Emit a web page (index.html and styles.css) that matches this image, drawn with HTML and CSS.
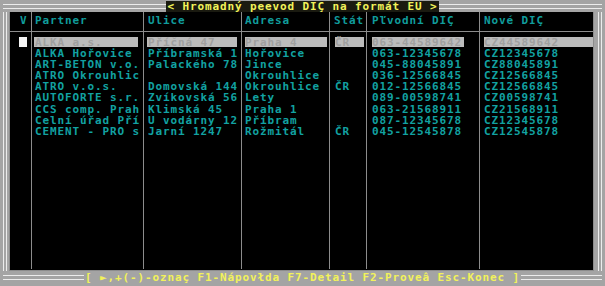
FILE: index.html
```html
<!DOCTYPE html>
<html lang="cs">
<head>
<meta charset="utf-8">
<link rel="stylesheet" href="styles.css">
</head>
<body>
<div class="screen">
  <div class="topbar">
    <span class="dline"></span>
    <span class="title">&lt; Hromadný peevod DIÇ na formát EU &gt;</span>
    <span class="dline"></span>
  </div>
  <div class="middle">
    <div class="panel">
      <div class="col c-v">
        <div class="hd">V</div>
        <div class="bd"><div class="row"><span class="chk"></span></div></div>
      </div>
      <div class="col c-p">
        <div class="hd">Partner</div>
        <div class="bd">
          <div class="row sel">ALKA a.s.</div>
          <div class="row">ALKA Hořovice</div>
          <div class="row">ART-BETON v.o.</div>
          <div class="row">ATRO Okrouhlic</div>
          <div class="row">ATRO v.o.s.</div>
          <div class="row">AUTOFORTE s.r.</div>
          <div class="row">CCS comp. Prah</div>
          <div class="row">Celní úřad Pří</div>
          <div class="row">CEMENT - PRO s</div>
        </div>
      </div>
      <div class="col c-u">
        <div class="hd">Ulice</div>
        <div class="bd">
          <div class="row sel">Příčná 47</div>
          <div class="row">Příbramská 1</div>
          <div class="row">Palackého 78</div>
          <div class="row"></div>
          <div class="row">Domovská 144</div>
          <div class="row">Zvíkovská 56</div>
          <div class="row">Klimská 45</div>
          <div class="row">U vodárny 12</div>
          <div class="row">Jarní 1247</div>
        </div>
      </div>
      <div class="col c-a">
        <div class="hd">Adresa</div>
        <div class="bd">
          <div class="row sel">Praha 4</div>
          <div class="row">Hořovice</div>
          <div class="row">Jince</div>
          <div class="row">Okrouhlice</div>
          <div class="row">Okrouhlice</div>
          <div class="row">Lety</div>
          <div class="row">Praha 1</div>
          <div class="row">Příbram</div>
          <div class="row">Rožmitál</div>
        </div>
      </div>
      <div class="col c-s">
        <div class="hd">Stát</div>
        <div class="bd">
          <div class="row sel">ČR</div>
          <div class="row"></div>
          <div class="row"></div>
          <div class="row"></div>
          <div class="row">ČR</div>
          <div class="row"></div>
          <div class="row"></div>
          <div class="row"></div>
          <div class="row">ČR</div>
        </div>
      </div>
      <div class="col c-o">
        <div class="hd">Pľvodní DIÇ</div>
        <div class="bd">
          <div class="row sel">063-44589642</div>
          <div class="row">063-12345678</div>
          <div class="row">045-88045891</div>
          <div class="row">036-12566845</div>
          <div class="row">012-12566845</div>
          <div class="row">089-00598741</div>
          <div class="row">063-21568911</div>
          <div class="row">087-12345678</div>
          <div class="row">045-12545878</div>
        </div>
      </div>
      <div class="col c-n">
        <div class="hd">Nové DIÇ</div>
        <div class="bd">
          <div class="row sel">CZ44589642</div>
          <div class="row">CZ12345678</div>
          <div class="row">CZ88045891</div>
          <div class="row">CZ12566845</div>
          <div class="row">CZ12566845</div>
          <div class="row">CZ00598741</div>
          <div class="row">CZ21568911</div>
          <div class="row">CZ12345678</div>
          <div class="row">CZ12545878</div>
        </div>
      </div>
    </div>
  </div>
  <div class="botbar">
    <span class="dline"></span>
    <span class="keys">[ ►,+(-)-oznaç F1-Nápovłda F7-Detail F2-Proveâ Esc-Konec ]</span>
    <span class="dline"></span>
  </div>
</div>
</body>
</html>
```
FILE: styles.css
```css
html, body {
  margin: 0;
  padding: 0;
  background: #a4a4a4;
}
.screen {
  width: 605px;
  height: 286px;
  box-sizing: border-box;
  background: #a4a4a4;
  padding: 0 3px 3px 3px;
  display: flex;
  flex-direction: column;
  font-family: "DejaVu Sans Mono", monospace;
  font-weight: bold;
  font-size: 11px;
  letter-spacing: 0.88px;
  line-height: 11px;
}
.topbar, .botbar {
  display: flex;
  align-items: center;
  height: 12px;
  flex: none;
}
.dline {
  flex: 1;
  height: 3px;
  border-top: 1px solid #ececec;
  border-bottom: 1px solid #ececec;
}
.title, .keys {
  color: #f2f25a;
  white-space: pre;
  padding: 0 1px;
}
.title { background: #1a1a10; }
.keys { background: #a4a4a4; }
.middle {
  flex: 1;
  border-left: 4px double #ececec;
  border-right: 4px double #ececec;
  padding: 0 4px 0 2px;
  display: flex;
}
.panel {
  flex: 1;
  background: #000;
  border: 1px solid #8c8c8c;
  border-top: none;
  display: flex;
  padding-bottom: 1px;
}
.col {
  border-right: 1px solid #8c8c8c;
  display: flex;
  flex-direction: column;
  color: #12a2a2;
}
.col:last-child { border-right: none; flex: 1; }
.hd {
  height: 16px;
  padding-top: 3px;
  border-bottom: 1px solid #8c8c8c;
  white-space: pre;
  color: #109c9c;
}
.bd { padding-top: 5px; }
.row {
  height: 11.1px;
  white-space: pre;
}
.sel {
  background: #bcbcbc;
  color: #a0a0a0;
  height: 10px;
  margin-bottom: 1.1px;
}
.c-v { width: 21px; }
.c-v .hd { padding-left: 10px; }
.c-v .bd { padding-left: 9px; }
.chk { display: block; width: 8px; height: 10px; background: #f4f4f4; }
.c-p { width: 111px; }
.c-p .hd, .c-p .row { padding-left: 3px; }
.c-p .sel { margin-left: 2px; width: 103px; padding-left: 1px; }
.c-u { width: 97px; }
.c-u .hd, .c-u .row { padding-left: 4px; }
.c-u .sel { margin-left: 3px; width: 89px; padding-left: 1px; }
.c-a { width: 87px; }
.c-a .hd, .c-a .row { padding-left: 3px; }
.c-a .sel { margin-left: 3px; width: 82px; padding-left: 0; }
.c-s { width: 36px; }
.c-s .hd { padding-left: 4px; }
.c-s .row { padding-left: 5px; }
.c-s .sel { margin-left: 5px; width: 29px; padding-left: 0; }
.c-o { width: 112px; }
.c-o .hd, .c-o .row { padding-left: 5px; }
.c-o .sel { margin-left: 5px; width: 92px; padding-left: 0; }
.c-n .hd, .c-n .row { padding-left: 4px; }
.c-n .sel { margin-left: 4px; padding-left: 0; }
```
